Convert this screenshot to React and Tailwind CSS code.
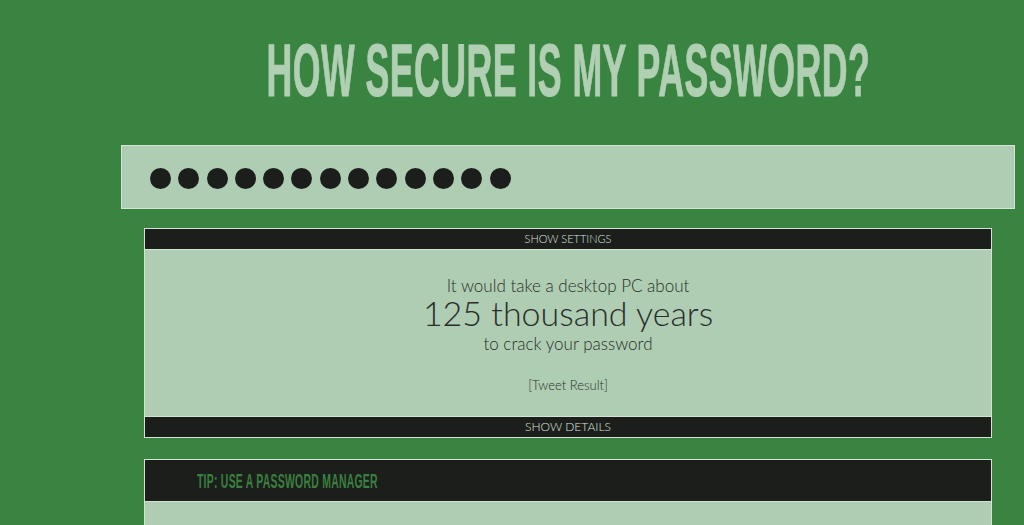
import React from 'react';

const dots = Array.from({ length: 13 });

function Title() {
  return (
    <div className="h-[145px] pt-[34px] flex justify-center">
      <h1 className="whitespace-nowrap text-[74px] leading-[74px] font-bold text-[#b0cfb3] scale-x-[0.482] origin-center tracking-[1px] [-webkit-text-stroke:1px_#b0cfb3]">
        HOW SECURE IS MY PASSWORD?
      </h1>
    </div>
  );
}

function PasswordField() {
  return (
    <div className="h-[64px] border border-[#d3e4d4] bg-[#aecdb2] pl-[28px] pt-[22px] flex gap-[7.3px]">
      {dots.map((_, i) => (
        <span key={i} className="block w-[21px] h-[21px] rounded-full bg-[#1b1e1b]" />
      ))}
    </div>
  );
}

function Result() {
  return (
    <div className="mx-[23px] mt-[19px] border border-[#d3e4d4] font-['Lato',sans-serif]">
      <div className="h-[21px] bg-[#1b1e1b] border-b border-[#d3e4d4] text-[11px] leading-[20px] font-light text-[#dfe3df] text-center">
        SHOW SETTINGS
      </div>
      <div className="h-[166px] bg-[#aecdb2] text-center text-[#2a2e2a] font-light pt-[26px]">
        <p className="text-[17px] leading-[20px]">It would take a desktop PC about</p>
        <p className="text-[34px] leading-[34px]">125 thousand years</p>
        <p className="mt-[4px] text-[17px] leading-[20px]">to crack your password</p>
        <p className="mt-[22px] text-[13px] leading-[18px]">[Tweet Result]</p>
      </div>
      <div className="h-[21px] bg-[#1b1e1b] border-t border-[#d3e4d4] text-[12px] leading-[20px] font-light text-[#dfe3df] text-center">
        SHOW DETAILS
      </div>
    </div>
  );
}

function Tip() {
  return (
    <div className="mx-[23px] mt-[21px] border border-[#d3e4d4]">
      <div className="h-[42px] bg-[#1b1e1b] border-b border-[#d3e4d4] pl-[52px] flex items-center overflow-hidden">
        <span className="whitespace-nowrap text-[21px] font-bold text-[#3a7f3f] scale-x-[0.497] origin-left tracking-[0.5px]">
          TIP: USE A PASSWORD MANAGER
        </span>
      </div>
      <div className="h-[80px] bg-[#aecdb2]" />
    </div>
  );
}

export default function App() {
  return (
    <div className="w-[1024px] h-[525px] overflow-hidden bg-[#3a8441] font-['Liberation_Sans',Arial,sans-serif]">
      <div className="ml-[121px] w-[894px]">
        <Title />
        <PasswordField />
        <Result />
        <Tip />
      </div>
    </div>
  );
}
